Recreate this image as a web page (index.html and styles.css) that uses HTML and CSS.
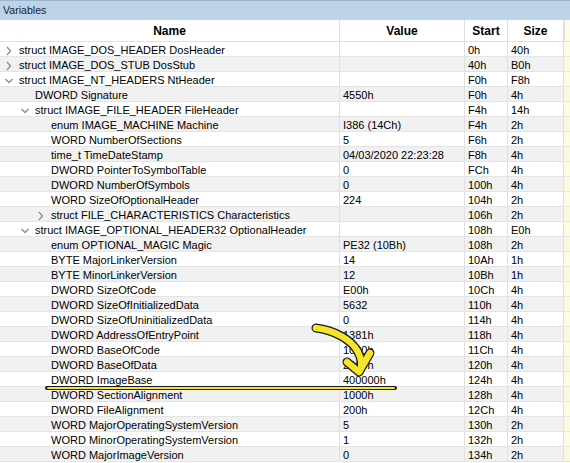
FILE: index.html
```html
<!DOCTYPE html>
<html>
<head>
<meta charset="utf-8">
<link rel="stylesheet" href="styles.css">
</head>
<body>
<div class="panel">
  <div class="titlebar">Variables</div>
  <div class="grid">
    <div class="row head">
      <div class="c hname">Name</div><div class="c val">Value</div><div class="c st">Start</div><div class="c sz">Size</div><div class="c pad"></div>
    </div>
    <div class="row"><div class="c name l0"><svg class="chev" viewBox="0 0 10 10"><polyline points="3,1 6.5,5 3,9"/></svg><span>struct IMAGE_DOS_HEADER DosHeader</span></div><div class="c val"></div><div class="c st">0h</div><div class="c sz">40h</div><div class="c pad"></div></div>
    <div class="row"><div class="c name l0"><svg class="chev" viewBox="0 0 10 10"><polyline points="3,1 6.5,5 3,9"/></svg><span>struct IMAGE_DOS_STUB DosStub</span></div><div class="c val"></div><div class="c st">40h</div><div class="c sz">B0h</div><div class="c pad"></div></div>
    <div class="row"><div class="c name l0"><svg class="chev" viewBox="0 0 10 10"><polyline points="1.5,3 5,6.5 8.5,3"/></svg><span>struct IMAGE_NT_HEADERS NtHeader</span></div><div class="c val"></div><div class="c st">F0h</div><div class="c sz">F8h</div><div class="c pad"></div></div>
    <div class="row"><div class="c name l1"><span class="nochev"></span><span>DWORD Signature</span></div><div class="c val">4550h</div><div class="c st">F0h</div><div class="c sz">4h</div><div class="c pad"></div></div>
    <div class="row"><div class="c name l1"><svg class="chev" viewBox="0 0 10 10"><polyline points="1.5,3 5,6.5 8.5,3"/></svg><span>struct IMAGE_FILE_HEADER FileHeader</span></div><div class="c val"></div><div class="c st">F4h</div><div class="c sz">14h</div><div class="c pad"></div></div>
    <div class="row"><div class="c name l2"><span class="nochev"></span><span>enum IMAGE_MACHINE Machine</span></div><div class="c val">I386 (14Ch)</div><div class="c st">F4h</div><div class="c sz">2h</div><div class="c pad"></div></div>
    <div class="row"><div class="c name l2"><span class="nochev"></span><span>WORD NumberOfSections</span></div><div class="c val">5</div><div class="c st">F6h</div><div class="c sz">2h</div><div class="c pad"></div></div>
    <div class="row"><div class="c name l2"><span class="nochev"></span><span>time_t TimeDateStamp</span></div><div class="c val">04/03/2020 22:23:28</div><div class="c st">F8h</div><div class="c sz">4h</div><div class="c pad"></div></div>
    <div class="row"><div class="c name l2"><span class="nochev"></span><span>DWORD PointerToSymbolTable</span></div><div class="c val">0</div><div class="c st">FCh</div><div class="c sz">4h</div><div class="c pad"></div></div>
    <div class="row"><div class="c name l2"><span class="nochev"></span><span>DWORD NumberOfSymbols</span></div><div class="c val">0</div><div class="c st">100h</div><div class="c sz">4h</div><div class="c pad"></div></div>
    <div class="row"><div class="c name l2"><span class="nochev"></span><span>WORD SizeOfOptionalHeader</span></div><div class="c val">224</div><div class="c st">104h</div><div class="c sz">2h</div><div class="c pad"></div></div>
    <div class="row"><div class="c name l2 sub"><svg class="chev" viewBox="0 0 10 10"><polyline points="3,1 6.5,5 3,9"/></svg><span>struct FILE_CHARACTERISTICS Characteristics</span></div><div class="c val"></div><div class="c st">106h</div><div class="c sz">2h</div><div class="c pad"></div></div>
    <div class="row"><div class="c name l1"><svg class="chev" viewBox="0 0 10 10"><polyline points="1.5,3 5,6.5 8.5,3"/></svg><span>struct IMAGE_OPTIONAL_HEADER32 OptionalHeader</span></div><div class="c val"></div><div class="c st">108h</div><div class="c sz">E0h</div><div class="c pad"></div></div>
    <div class="row"><div class="c name l2"><span class="nochev"></span><span>enum OPTIONAL_MAGIC Magic</span></div><div class="c val">PE32 (10Bh)</div><div class="c st">108h</div><div class="c sz">2h</div><div class="c pad"></div></div>
    <div class="row"><div class="c name l2"><span class="nochev"></span><span>BYTE MajorLinkerVersion</span></div><div class="c val">14</div><div class="c st">10Ah</div><div class="c sz">1h</div><div class="c pad"></div></div>
    <div class="row"><div class="c name l2"><span class="nochev"></span><span>BYTE MinorLinkerVersion</span></div><div class="c val">12</div><div class="c st">10Bh</div><div class="c sz">1h</div><div class="c pad"></div></div>
    <div class="row"><div class="c name l2"><span class="nochev"></span><span>DWORD SizeOfCode</span></div><div class="c val">E00h</div><div class="c st">10Ch</div><div class="c sz">4h</div><div class="c pad"></div></div>
    <div class="row"><div class="c name l2"><span class="nochev"></span><span>DWORD SizeOfInitializedData</span></div><div class="c val">5632</div><div class="c st">110h</div><div class="c sz">4h</div><div class="c pad"></div></div>
    <div class="row"><div class="c name l2"><span class="nochev"></span><span>DWORD SizeOfUninitializedData</span></div><div class="c val">0</div><div class="c st">114h</div><div class="c sz">4h</div><div class="c pad"></div></div>
    <div class="row"><div class="c name l2"><span class="nochev"></span><span>DWORD AddressOfEntryPoint</span></div><div class="c val">1381h</div><div class="c st">118h</div><div class="c sz">4h</div><div class="c pad"></div></div>
    <div class="row"><div class="c name l2"><span class="nochev"></span><span>DWORD BaseOfCode</span></div><div class="c val">1000h</div><div class="c st">11Ch</div><div class="c sz">4h</div><div class="c pad"></div></div>
    <div class="row"><div class="c name l2"><span class="nochev"></span><span>DWORD BaseOfData</span></div><div class="c val">2000h</div><div class="c st">120h</div><div class="c sz">4h</div><div class="c pad"></div></div>
    <div class="row"><div class="c name l2"><span class="nochev"></span><span>DWORD ImageBase</span></div><div class="c val">400000h</div><div class="c st">124h</div><div class="c sz">4h</div><div class="c pad"></div></div>
    <div class="row"><div class="c name l2"><span class="nochev"></span><span>DWORD SectionAlignment</span></div><div class="c val">1000h</div><div class="c st">128h</div><div class="c sz">4h</div><div class="c pad"></div></div>
    <div class="row"><div class="c name l2"><span class="nochev"></span><span>DWORD FileAlignment</span></div><div class="c val">200h</div><div class="c st">12Ch</div><div class="c sz">4h</div><div class="c pad"></div></div>
    <div class="row"><div class="c name l2"><span class="nochev"></span><span>WORD MajorOperatingSystemVersion</span></div><div class="c val">5</div><div class="c st">130h</div><div class="c sz">2h</div><div class="c pad"></div></div>
    <div class="row"><div class="c name l2"><span class="nochev"></span><span>WORD MinorOperatingSystemVersion</span></div><div class="c val">1</div><div class="c st">132h</div><div class="c sz">2h</div><div class="c pad"></div></div>
    <div class="row"><div class="c name l2"><span class="nochev"></span><span>WORD MajorImageVersion</span></div><div class="c val">0</div><div class="c st">134h</div><div class="c sz">2h</div><div class="c pad"></div></div>
  </div>
  <svg class="annot" viewBox="0 0 570 463" width="570" height="463">
    <g fill="none" stroke="#1a1a1a" stroke-linecap="round" stroke-linejoin="round">
      <line x1="47" y1="388" x2="395" y2="388" stroke-width="4"/>
      <path d="M316,328 C334,330 352,340 358,352 C362,360 362,366 360,370" stroke-width="9"/>
      <polyline points="347,362 359,372 370,353" stroke-width="9"/>
    </g>
    <g fill="none" stroke="#f4e52b" stroke-linecap="round" stroke-linejoin="round">
      <line x1="48" y1="388" x2="394" y2="388" stroke-width="2"/>
      <path d="M316,328 C334,330 352,340 358,352 C362,360 362,366 360,370" stroke-width="6.5"/>
      <polyline points="347,362 359,372 370,353" stroke-width="6.5"/>
    </g>
  </svg>
</div>
</body>
</html>
```
FILE: styles.css
```css
html, body {
  margin: 0;
  padding: 0;
  background: #ffffff;
}
.panel {
  position: relative;
  width: 570px;
  height: 463px;
  overflow: hidden;
  font-family: "Liberation Sans", Arial, sans-serif;
  font-size: 11px;
  color: #000;
}
.titlebar {
  height: 19px;
  line-height: 19px;
  padding-left: 3px;
  font-size: 10.6px;
  background: #bdd3ea;
  border-top: 1px solid #9fb4cc;
  color: #1e1e1e;
}
.grid {
  display: flex;
  flex-direction: column;
}
.row {
  display: grid;
  grid-template-columns: 340px 125px 43px 56px 6px;
  height: 15px;
  border-bottom: 1px solid #e4e4e4;
  box-sizing: border-box;
  white-space: nowrap;
}
.row:nth-child(odd) {
  background: #f1f1f1;
}
.c {
  border-right: 1px solid #e0e0e0;
  padding: 2px 0 0 3px;
  line-height: 12px;
  box-sizing: border-box;
  height: 14px;
}
.row.head {
  height: 22px;
  background: #fff;
  border-bottom: 1px solid #e0e0e0;
}
.row.head .c {
  height: 21px;
  padding: 2px 0 0 0;
  line-height: 19px;
  font-size: 12px;
  font-weight: bold;
  text-align: center;
}
.c.pad {
  border-right: none;
  background: #fffce6;
  padding: 0;
}
.row:nth-child(odd) .c.pad { background: #fbf8e1; }
.row.head .c.pad { background: #fffce6; border-left: 1px solid #e0e0e0; }
.name {
  display: flex;
  align-items: flex-start;
}
.name.l0 { padding-left: 3px; }
.name.l1 { padding-left: 19px; }
.name.l2 { padding-left: 35px; }
.chev, .nochev {
  width: 10px;
  height: 10px;
  flex: none;
  margin: 1.5px 5px 0 1px;
}
.chev polyline {
  fill: none;
  stroke: #8c8c8c;
  stroke-width: 1.3;
}
.annot {
  position: absolute;
  left: 0;
  top: 0;
  pointer-events: none;
}
```
